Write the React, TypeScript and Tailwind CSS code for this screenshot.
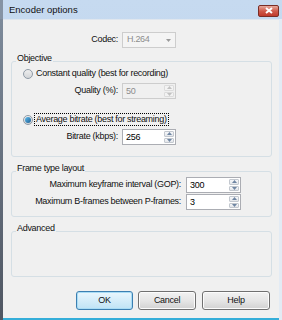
import React from 'react';

const Spin = ({ value, disabled = false, w }: { value: string; disabled?: boolean; w: string }) => (
  <div
    className={`${w} h-[16px] shrink-0 flex border ${
      disabled ? 'border-[#cdcdcd] bg-[#f0f0f0] text-[#8d8d8d]' : 'border-[#abadb3] bg-white text-black'
    }`}
  >
    <div className="flex-1 pl-[3px] leading-[14px]">{value}</div>
    <div className="w-[11px] flex flex-col gap-[1px] p-[1px] pl-0">
      {['up', 'down'].map((d) => (
        <div
          key={d}
          className={`flex-1 flex items-center justify-center rounded-[1px] border ${
            disabled ? 'border-[#dcdcdc] bg-[#f3f3f3]' : 'border-[#c3c8cf] bg-gradient-to-b from-[#f6f7f9] to-[#e3e6ea]'
          }`}
        >
          <svg width="5" height="3" viewBox="0 0 5 3">
            <path
              d={d === 'up' ? 'M0 3 L2.5 0 L5 3 Z' : 'M0 0 L2.5 3 L5 0 Z'}
              fill={disabled ? '#c2c2c2' : '#6f86a3'}
            />
          </svg>
        </div>
      ))}
    </div>
  </div>
);

const Radio = ({ checked }: { checked?: boolean }) => (
  <div className="w-[10px] h-[10px] shrink-0 rounded-full border border-[#8f9aa6] bg-gradient-to-b from-[#eeeeee] to-[#d3d5d8] flex items-center justify-center">
    {checked && <div className="w-[6px] h-[6px] rounded-full bg-gradient-to-br from-[#5fbdf0] to-[#1f5f92]" />}
  </div>
);

const Group = ({ title, className, children }: { title: string; className: string; children?: React.ReactNode }) => (
  <div className={`relative ml-[8px] w-[261px] shrink-0 rounded-[3px] border border-[#d5dfe5] ${className}`}>
    <span className="absolute -top-[10px] left-[4px] bg-[#f0f0f0] px-[1px] leading-[12px] whitespace-nowrap">{title}</span>
    {children}
  </div>
);

const Button = ({ label, w, primary }: { label: string; w: string; primary?: boolean }) => (
  <div
    className={`${w} h-[19px] rounded-[3px] border flex items-center justify-center ${
      primary
        ? 'border-[#3c7fb1] bg-gradient-to-b from-[#eaf6fd] to-[#bfe3f5] shadow-[inset_0_0_0_1px_#a9dcf5]'
        : 'border-[#707070] bg-gradient-to-b from-[#f2f2f2] via-[#e6e6e6] to-[#d2d2d2] shadow-[inset_0_0_0_1px_#fcfcfc]'
    }`}
  >
    {label}
  </div>
);

export default function App() {
  return (
    <div className="w-[282px] h-[320px] overflow-hidden flex flex-col bg-gradient-to-b from-[#c6daf0] to-[#b9d0ea] font-['Liberation_Sans',Arial,sans-serif] text-[9px] tracking-[-0.3px] text-[#111] whitespace-nowrap">
      <div className="h-[19px] shrink-0 flex items-center justify-between pl-[6px] pr-[3px] border-l-[3px] border-[#8593a4]">
        <span className="text-[9.5px] tracking-normal leading-none">Encoder options</span>
        <div className="w-[21px] h-[12px] mt-[2px] rounded-[2px] border border-[#7a2d25] bg-gradient-to-b from-[#e5a99e] via-[#cf5a4b] to-[#c0392b] flex items-center justify-center">
          <svg width="8" height="7" viewBox="0 0 8 7">
            <path d="M1 1 L7 6 M7 1 L1 6" stroke="#ffffff" strokeWidth="2" />
          </svg>
        </div>
      </div>
      <div className="flex-1 min-h-0 flex">
        <div className="w-[3px] bg-gradient-to-b from-[#7d8a9a] to-[#4f5662]" />
        <div className="flex-1 flex flex-col">
          <div className="flex-1 min-h-0 bg-[#f0f0f0] flex flex-col border-t border-[#dfe6ee]">
            <div className="flex items-center mt-[12px]">
              <span className="w-[119px] pr-[4px] text-right">Codec:</span>
              <div className="w-[54px] h-[16px] border border-[#cdcdcd] bg-[#f4f4f4] flex items-center justify-between pl-[4px] pr-[4px] text-[#8d8d8d]">
                <span>H.264</span>
                <svg width="5" height="3" viewBox="0 0 5 3">
                  <path d="M0 0 L2.5 3 L5 0 Z" fill="#9a9a9a" />
                </svg>
              </div>
            </div>

            <Group title="Objective" className="mt-[13px] pt-[5px] pb-[11px]">
              <div className="flex items-center h-[13px] pl-[11px] gap-[3px]">
                <Radio />
                <span>Constant quality (best for recording)</span>
              </div>
              <div className="flex items-center mt-[3px]">
                <span className="w-[110px] pr-[4px] text-right">Quality (%):</span>
                <Spin value="50" disabled w="w-[54px]" />
              </div>
              <div className="flex items-center h-[13px] pl-[11px] gap-[1px] mt-[14px]">
                <Radio checked />
                <span className="border border-dotted border-black px-[1px] leading-[11px]">
                  Average bitrate (best for streaming)
                </span>
              </div>
              <div className="flex items-center mt-[3px]">
                <span className="w-[110px] pr-[4px] text-right">Bitrate (kbps):</span>
                <Spin value="256" w="w-[54px]" />
              </div>
            </Group>

            <Group title="Frame type layout" className="mt-[14px] pt-[5px] pb-[6px]">
              <div className="flex items-center">
                <span className="w-[174px] pr-[5px] text-right">Maximum keyframe interval (GOP):</span>
                <Spin value="300" w="w-[55px]" />
              </div>
              <div className="flex items-center mt-[1px]">
                <span className="w-[174px] pr-[5px] text-right">Maximum B-frames between P-frames:</span>
                <Spin value="3" w="w-[55px]" />
              </div>
            </Group>

            <Group title="Advanced" className="mt-[14px] h-[46px]" />

            <div className="flex mt-[14px] ml-[73px] gap-[5px]">
              <Button label="OK" w="w-[57px]" primary />
              <Button label="Cancel" w="w-[58px]" />
              <Button label="Help" w="w-[68px] ml-[1px]" />
            </div>
          </div>
          <div className="h-[2px] shrink-0 bg-[#35aed9]" />
        </div>
        <div className="w-[3px] bg-[#e3ebf4]" />
      </div>
    </div>
  );
}
